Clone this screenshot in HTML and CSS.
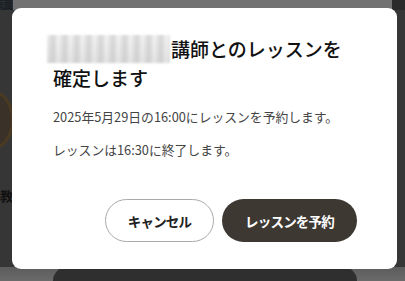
FILE: index.html
```html
<!DOCTYPE html>
<html lang="ja">
<head>
<meta charset="utf-8">
<link rel="stylesheet" href="styles.css">
</head>
<body>
<div class="page">
  <div class="page-top"><span class="page-title">講</span></div>
  <div class="page-mid">
    <div class="avatar"></div>
    <div class="page-label">教</div>
  </div>
  <div class="page-bottom"><div class="page-btn"></div></div>
</div>
<div class="overlay">
  <div class="modal" role="dialog">
    <h2 class="modal-title"><span class="redacted"></span>講師とのレッスンを確定します</h2>
    <p class="modal-text">2025年5月29日の16:00にレッスンを予約します。</p>
    <p class="modal-text">レッスンは16:30に終了します。</p>
    <div class="modal-actions">
      <button class="btn btn-outline">キャンセル</button>
      <button class="btn btn-primary">レッスンを予約</button>
    </div>
  </div>
</div>
</body>
</html>
```
FILE: styles.css
```css
* { box-sizing: border-box; }
html, body { margin: 0; padding: 0; }
body {
  width: 405px;
  height: 281px;
  overflow: hidden;
  font-family: "Noto Sans CJK JP", "Noto Sans", sans-serif;
  background: #3a3a3a;
}
.page {
  height: 281px;
  display: flex;
  flex-direction: column;
}
.page-top {
  height: 10px;
  background: linear-gradient(to right, #2c3238 0, #2c3238 13px, #727272 13px, #727272 392px, #2a2a2a 392px);
  overflow: hidden;
}
.page-title {
  display: block;
  font-size: 15px;
  font-weight: 700;
  line-height: 10px;
  color: #1c2024;
  margin-top: -1px;
  margin-left: -2px;
}
.page-mid {
  flex: 1;
  position: relative;
  background: #363636;
}
.avatar {
  position: absolute;
  left: -30px;
  top: 80px;
  width: 44px;
  height: 60px;
  border-radius: 50%;
  border: 3px solid #4b3a22;
  background: #3a3128;
}
.page-label {
  position: absolute;
  left: 0;
  top: 176px;
  font-size: 13px;
  font-weight: 700;
  color: #111;
}
.page-bottom {
  height: 14px;
  background: linear-gradient(to bottom, #5c5c5c, #6a6a6a);
  padding: 0 48px 0 53px;
}
.page-btn {
  height: 24px;
  background: #2f2f2f;
  border-radius: 14px 14px 0 0;
}
.overlay {
  position: fixed;
  inset: 0;
  padding: 8px 8px 0 12px;
}
.modal {
  width: 385px;
  height: 261px;
  background: #fff;
  border-radius: 9px;
  padding: 26px 40px 27px 41px;
  display: flex;
  flex-direction: column;
}
.modal-title {
  margin: 0 0 15px;
  font-size: 19px;
  line-height: 29px;
  font-weight: 500;
  color: #111;
}
.redacted {
  display: inline-block;
  width: 123px;
  height: 28px;
  margin-left: -6px;
  margin-right: 1px;
  vertical-align: -6px;
  background:
    repeating-linear-gradient(to right, rgba(255,255,255,0) 0, rgba(190,190,190,0.55) 6px, rgba(255,255,255,0.3) 12px),
    linear-gradient(to bottom, #f2f2f2, #e0e0e0);
  filter: blur(1px);
}
.modal-text {
  margin: 0 0 13px;
  font-size: 12.8px;
  line-height: 20px;
  color: #444;
}
.modal-actions {
  margin-top: auto;
  display: flex;
  justify-content: flex-end;
  gap: 8px;
}
.btn {
  height: 43px;
  border-radius: 22px;
  font-family: "Noto Sans CJK JP", sans-serif;
  font-size: 13.5px;
  letter-spacing: -0.8px;
  font-weight: 700;
  padding: 0;
  white-space: nowrap;
  cursor: pointer;
}
.btn-outline {
  width: 109px;
  background: #fff;
  border: 1px solid #a9a9a9;
  color: #222;
}
.btn-primary {
  width: 135px;
  background: #3d3832;
  border: none;
  color: #fff;
}
```
